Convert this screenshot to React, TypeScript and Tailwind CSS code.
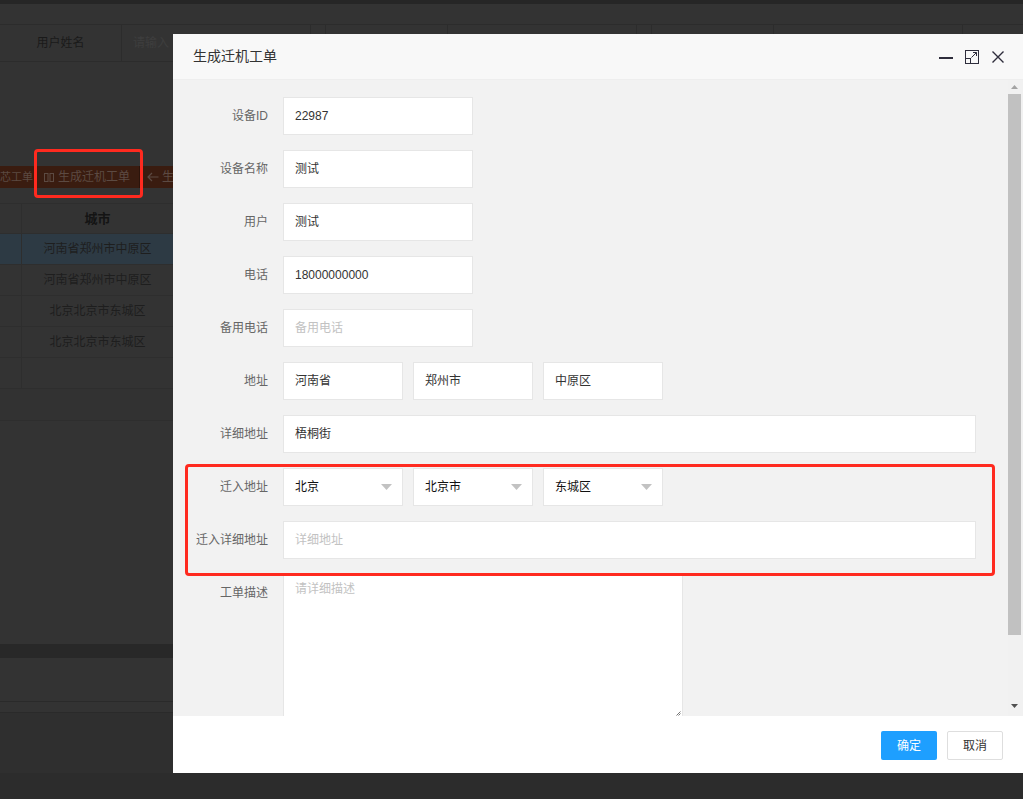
import React from "react";

const font = "font-[family-name:'Liberation_Sans','Noto_Sans_CJK_SC',sans-serif]";

function Field({ value, placeholder, w }: { value?: string; placeholder?: string; w: string }) {
  return (
    <div className={`${w} h-[38px] bg-white border border-[#e6e6e6] flex items-center pl-[11px] text-[12px]`}>
      {value ? <span className="text-[#333]">{value}</span> : <span className="text-[#c2c2c2]">{placeholder}</span>}
    </div>
  );
}

function Select({ value }: { value: string }) {
  return (
    <div className="w-[120px] h-[38px] bg-white border border-[#e6e6e6] flex items-center pl-[11px] pr-[10px] text-[12px] text-[#111]">
      <span className="flex-1">{value}</span>
      <svg width="11" height="6" viewBox="0 0 11 6">
        <path d="M0 0 L11 0 L5.5 6 Z" fill="#c2c2c2" />
      </svg>
    </div>
  );
}

function Row({ label, children, top }: { label: string; children: React.ReactNode; top?: boolean }) {
  return (
    <div className={`flex ${top ? "items-start" : "items-center"} mb-[15px]`}>
      <div className={`w-[110px] shrink-0 pr-[15px] text-right text-[12px] text-[#666] ${top ? "pt-[10px]" : ""}`}>{label}</div>
      <div className="flex gap-[10px]">{children}</div>
    </div>
  );
}

function SearchGroup({ label }: { label: string }) {
  return (
    <div className="flex h-full border-x border-[#2c2c2c]">
      <div className="w-[122px] border-r border-[#2c2c2c] flex items-center justify-center text-[12px] text-[#1a1a1a]">{label}</div>
      <div className="w-[188px] flex items-center pl-[11px] text-[12px] text-[#3e3e3e]">请输入</div>
    </div>
  );
}

export default function App() {
  const rows = ["河南省郑州市中原区", "河南省郑州市中原区", "北京北京市东城区", "北京北京市东城区", ""];
  return (
    <div className={`relative w-[1023px] h-[799px] overflow-hidden bg-[#333333] ${font}`}>
      {/* background page (under overlay) */}
      <div className="flex flex-col h-full">
        <div className="h-[4px] bg-[#262626]" />
        <div className="h-[20px]" />
        <div className="h-[38px] flex gap-[14px] border-y border-[#2c2c2c] -ml-[1px]">
          <SearchGroup label="用户姓名" />
          <SearchGroup label="设备名称" />
          <SearchGroup label="设备ID" />
        </div>
        <div className="h-[104px]" />
        <div className="h-[22px] bg-[#3a1c10] flex items-center text-[12px] text-[#5c4a42] whitespace-nowrap">
          <div className="w-[35px] flex justify-end pr-[2px] text-[11px]">芯工单</div>
          <div className="w-[2px] h-full bg-[#2a140b]" />
          <div className="flex items-center gap-[4px] pl-[7px] w-[102px]">
            <svg width="10" height="11" viewBox="0 0 10 11" fill="none" stroke="#5c4a42" strokeWidth="1">
              <rect x="0.5" y="1.5" width="3.5" height="8" />
              <rect x="6" y="1.5" width="3.5" height="8" />
            </svg>
            <span>生成迁机工单</span>
          </div>
          <div className="w-[2px] h-full bg-[#2a140b]" />
          <div className="pl-[6px] flex items-center gap-[3px]">
            <svg width="12" height="10" viewBox="0 0 12 10" fill="none" stroke="#5c4a42" strokeWidth="1.2">
              <path d="M11.5 5 H1 M5 1 L1 5 L5 9" />
            </svg>
            <span>生成</span>
          </div>
        </div>
        <div className="h-[15px]" />
        <div className="flex flex-col border-t border-[#2e2e2e]">
          <div className="flex h-[30px] border-b border-[#2e2e2e]">
            <div className="w-[22px] border-r border-[#2e2e2e]" />
            <div className="w-[151px] flex items-center justify-center text-[13px] font-bold text-[#141414]">城市</div>
          </div>
          {rows.map((r, i) => (
            <div key={i} className={`flex h-[31px] border-b border-[#2e2e2e] ${i === 0 ? "bg-[#2d3a44]" : ""}`}>
              <div className="w-[22px] border-r border-[#2e2e2e]" />
              <div className="w-[151px] flex items-center justify-center text-[12px] text-[#1e1e1e]">{r}</div>
            </div>
          ))}
          <div className="h-[32px] border-b border-[#2e2e2e] bg-[#323232]" />
        </div>
        <div className="h-[223px]" />
        <div className="h-[14px] bg-[#282828]" />
        <div className="h-[43px]" />
        <div className="h-[12px] border-y border-[#2a2a2a]" />
        <div className="flex-1 bg-[#2f2f2f]" />
        <div className="h-[26px] bg-[#2c2c2c]" />
      </div>

      {/* annotation box 1 */}
      <div className="absolute left-[34px] top-[149px] w-[109px] h-[49px] border-[3px] border-[#ff2a1f] rounded-[4px]" />

      {/* dialog */}
      <div className="absolute left-[173px] top-[34px] w-[850px] h-[739px] flex flex-col bg-white">
        <div className="h-[46px] shrink-0 bg-[#f8f8f8] border-b border-[#eeeeee] flex items-center pl-[20px] pr-[18px]">
          <span className="text-[14px] text-[#333]">生成迁机工单</span>
          <div className="ml-auto flex items-center gap-[12px]">
            <svg width="14" height="14" viewBox="0 0 14 14">
              <rect x="0" y="7" width="14" height="2" fill="#2e2d3c" />
            </svg>
            <svg width="14" height="14" viewBox="0 0 14 14" fill="none" stroke="#2e2d3c" strokeWidth="1">
              <rect x="0.5" y="0.5" width="13" height="13" />
              <rect x="0.5" y="8.5" width="5" height="5" />
              <path d="M6.5 7.5 L11.5 2.5 M8 2.5 H11.5 V6" />
            </svg>
            <svg width="14" height="14" viewBox="0 0 14 14" fill="none" stroke="#2e2d3c" strokeWidth="1.4">
              <path d="M1.5 1.5 L12.5 12.5 M12.5 1.5 L1.5 12.5" />
            </svg>
          </div>
        </div>
        <div className="flex-1 min-h-0 flex bg-[#f2f2f2]">
          <div className="flex-1 min-w-0 overflow-hidden pt-[17px]">
            <Row label="设备ID"><Field w="w-[190px]" value="22987" /></Row>
            <Row label="设备名称"><Field w="w-[190px]" value="测试" /></Row>
            <Row label="用户"><Field w="w-[190px]" value="测试" /></Row>
            <Row label="电话"><Field w="w-[190px]" value="18000000000" /></Row>
            <Row label="备用电话"><Field w="w-[190px]" placeholder="备用电话" /></Row>
            <Row label="地址">
              <Field w="w-[120px]" value="河南省" />
              <Field w="w-[120px]" value="郑州市" />
              <Field w="w-[120px]" value="中原区" />
            </Row>
            <Row label="详细地址"><Field w="w-[693px]" value="梧桐街" /></Row>
            <Row label="迁入地址">
              <Select value="北京" />
              <Select value="北京市" />
              <Select value="东城区" />
            </Row>
            <Row label="迁入详细地址"><Field w="w-[693px]" placeholder="详细地址" /></Row>
            <Row label="工单描述" top>
              <div className="relative w-[400px] h-[144px] bg-white border border-[#e6e6e6] pl-[11px] pt-[5px] text-[12px] text-[#c2c2c2]">
                请详细描述
                <svg className="absolute right-[1px] bottom-[1px]" width="5" height="5" viewBox="0 0 5 5">
                  <path d="M4.5 0.5 L0.5 4.5 M4.5 2.5 L2.5 4.5" stroke="#777" strokeWidth="1" />
                </svg>
              </div>
            </Row>
          </div>
          <div className="w-[15px] shrink-0 flex flex-col bg-[#f1f1f1]">
            <div className="h-[14px] flex items-center justify-center pr-[2px]">
              <svg width="7" height="4" viewBox="0 0 7 4"><path d="M0 4 L3.5 0 L7 4 Z" fill="#a3a3a3" /></svg>
            </div>
            <div className="h-[541px] w-[13px] bg-[#c1c1c1]" />
            <div className="flex-1" />
            <div className="h-[20px] flex items-center justify-center pr-[2px]">
              <svg width="7" height="4" viewBox="0 0 7 4"><path d="M0 0 L7 0 L3.5 4 Z" fill="#505050" /></svg>
            </div>
          </div>
        </div>
        <div className="h-[57px] shrink-0 bg-white flex justify-end items-start pt-[15px] pr-[20px] gap-[10px]">
          <div className="w-[56px] h-[29px] rounded-[2px] bg-[#1e9fff] text-white text-[12px] flex items-center justify-center">确定</div>
          <div className="w-[56px] h-[29px] rounded-[2px] bg-white border border-[#dedede] text-[#333] text-[12px] flex items-center justify-center">取消</div>
        </div>
      </div>

      {/* annotation box 2 */}
      <div className="absolute left-[185px] top-[464px] w-[810px] h-[112px] border-[3px] border-[#ff2a1f] rounded-[4px]" />
    </div>
  );
}
